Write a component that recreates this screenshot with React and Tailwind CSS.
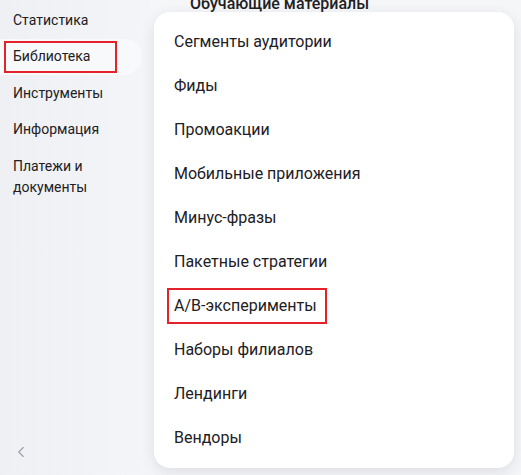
import { ChevronLeft } from "lucide-react";

const sideItems = ["Статистика", "Библиотека", "Инструменты", "Информация"];

const menuItems = [
  "Сегменты аудитории",
  "Фиды",
  "Промоакции",
  "Мобильные приложения",
  "Минус-фразы",
  "Пакетные стратегии",
  "A/B-эксперименты",
  "Наборы филиалов",
  "Лендинги",
  "Вендоры",
];

export default function App() {
  return (
    <div className="relative flex h-[475px] w-[521px] overflow-hidden bg-[#f5f6f8] font-['Roboto',sans-serif] text-[#21201f]">
      {/* sidebar */}
      <div className="flex w-[150px] flex-col bg-gradient-to-r from-[#eef0f4] to-[#f4f5f8] pt-[2px]">
        {sideItems.map((item) => (
          <div
            key={item}
            className={`flex h-[36.5px] items-center text-[14px] ${
              item === "Библиотека" ? "mr-[8px] rounded-r-[18px] bg-[#f8f9fb]" : ""
            }`}
          >
            {item === "Библиотека" ? (
              <span className="ml-[4px] flex h-[32px] w-[113px] items-center border-2 border-[#e5222a] pl-[7px]">
                {item}
              </span>
            ) : (
              <span className="ml-[13px]">{item}</span>
            )}
          </div>
        ))}
        <div className="ml-[13px] mt-[8px] text-[14px] leading-[21px]">
          Платежи и
          <br />
          документы
        </div>
        <div className="mt-auto mb-[14px] ml-[12px] text-[#9ba0a8]">
          <ChevronLeft size={18} strokeWidth={1.5} />
        </div>
      </div>

      {/* content */}
      <div className="relative flex-1">
        <div className="-mt-[8px] ml-[40px] text-[16px] font-medium">Обучающие материалы</div>
      </div>

      {/* dropdown */}
      <div className="absolute left-[154px] top-[12px] w-[360px] rounded-[16px] bg-white py-[8px] shadow-[0_4px_14px_rgba(40,50,80,0.12)]">
        {menuItems.map((item) => (
          <div key={item} className="flex h-[44px] items-center pl-[20px] text-[16px]">
            {item === "A/B-эксперименты" ? (
              <span className="-ml-[7px] flex h-[36px] w-[160px] items-center border-2 border-[#e5222a] pl-[5px]">
                {item}
              </span>
            ) : (
              item
            )}
          </div>
        ))}
      </div>
    </div>
  );
}
